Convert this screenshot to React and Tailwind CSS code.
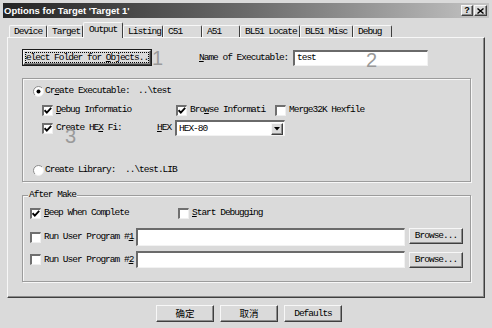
import React from "react";

const mono =
  "font-['Liberation_Mono',monospace] text-[9.5px] tracking-[-1px] leading-[12px] text-black whitespace-nowrap";

function U({ children }) {
  return <span className="underline decoration-1 underline-offset-[1px]">{children}</span>;
}

function Check({ checked }) {
  return (
    <div className="w-[11px] h-[11px] shrink-0 bg-white border-t-2 border-l-2 border-r border-b border-t-[#6f6f6f] border-l-[#6f6f6f] border-r-[#efefef] border-b-[#efefef] flex items-center justify-center">
      {checked && (
        <svg width="8" height="7" viewBox="0 0 8 7">
          <path d="M0.6 3.2 L2.8 5.6 L7.2 0.8" stroke="#000" strokeWidth="1.8" fill="none" />
        </svg>
      )}
    </div>
  );
}

function Radio({ checked }) {
  return (
    <svg width="11" height="11" viewBox="0 0 11 11" className="shrink-0">
      <circle cx="5.5" cy="5.5" r="5" fill="#fff" />
      <path d="M1.96 9.04 A5 5 0 0 1 9.04 1.96" stroke="#8a8a8a" strokeWidth="1" fill="none" />
      <path d="M9.04 1.96 A5 5 0 0 1 1.96 9.04" stroke="#efefef" strokeWidth="1" fill="none" />
      {checked && <circle cx="5.5" cy="5.5" r="2" fill="#000" />}
    </svg>
  );
}

function Btn({ className = "", children }) {
  return (
    <div
      className={`flex items-center justify-center bg-[#dadada] border border-t-[#f7f7f7] border-l-[#f7f7f7] border-r-[#3f3f3f] border-b-[#3f3f3f] shadow-[inset_-1px_-1px_0_#8c8c8c] ${className}`}
    >
      {children}
    </div>
  );
}

function Field({ className = "", children }) {
  return (
    <div
      className={`bg-white border-t-2 border-l-2 border-r border-b border-t-[#6a6a6a] border-l-[#6a6a6a] border-r-[#f2f2f2] border-b-[#f2f2f2] flex items-center pl-[2px] ${className}`}
    >
      {children}
    </div>
  );
}

function Tab({ className = "", children, active }) {
  if (active) {
    return (
      <div
        className={`relative z-10 h-[16px] -mb-px bg-[#dadada] border-t border-l border-t-[#f7f7f7] border-l-[#f7f7f7] border-r border-r-[#3f3f3f] rounded-t-[2px] pl-[5px] pt-[1px] ${mono} ${className}`}
      >
        {children}
      </div>
    );
  }
  return (
    <div
      className={`h-[12px] bg-[#dadada] border-t border-l border-t-[#f7f7f7] border-l-[#f7f7f7] border-r border-r-[#3f3f3f] rounded-t-[2px] pl-[4px] ${mono} ${className}`}
    >
      {children}
    </div>
  );
}

export default function App() {
  return (
    <div className="relative w-[492px] h-[328px] overflow-hidden bg-[#dadada] pt-[3px] px-[3px]">
      {/* title bar */}
      <div className="h-[15px] w-[486px] bg-linear-to-r from-[#252525] via-[#6a6a6a] to-[#c4c4c4] flex items-center pl-[1px]">
        <span className="font-['Liberation_Sans',sans-serif] text-[9.5px] font-bold text-white leading-none whitespace-nowrap">
          Options for Target 'Target 1'
        </span>
        <div className="ml-auto mr-[2px] flex">
          <Btn className="w-[12px] h-[11px]">
            <span className="font-['Liberation_Sans',sans-serif] text-[9px] font-bold leading-none text-black">?</span>
          </Btn>
          <Btn className="w-[13px] h-[11px] ml-px">
            <svg width="7" height="6" viewBox="0 0 7 6">
              <path d="M0.5 0.5 L6.5 5.5 M6.5 0.5 L0.5 5.5" stroke="#000" strokeWidth="1.4" />
            </svg>
          </Btn>
        </div>
      </div>

      {/* tabs */}
      <div className="flex items-end h-[15px] mt-[4px] ml-[6px]">
        <Tab className="w-[38px]">Device</Tab>
        <Tab className="w-[36px]">Target</Tab>
        <Tab className="w-[40px]" active>
          Output
        </Tab>
        <Tab className="w-[40px]">Listing</Tab>
        <Tab className="w-[39px]">C51</Tab>
        <Tab className="w-[38px]">A51</Tab>
        <Tab className="w-[60px]">BL51 Locate</Tab>
        <Tab className="w-[53px]">BL51 Misc</Tab>
        <Tab className="w-[39px]">Debug</Tab>
      </div>

      {/* panel */}
      <div className="relative ml-[4px] w-[478px] h-[261px] bg-[#dadada] border border-t-[#f7f7f7] border-l-[#f7f7f7] border-r-[#3f3f3f] border-b-[#3f3f3f] shadow-[inset_-1px_-1px_0_#8c8c8c]">
        {/* row 1 */}
        <div className="flex items-center mt-[11px] ml-[14px] h-[17px]">
          <div className="w-[130px] h-[17px] border border-[#1a1a1a]">
            <Btn className="w-full h-full p-px">
              <div className={`w-full h-full border border-dotted border-black flex items-center justify-center overflow-x-clip ${mono}`}>
                <span className="shrink-0">
                  Select Folder for <U>O</U>bjects...
                </span>
              </div>
            </Btn>
          </div>
          <div className={`ml-[47px] w-[94px] ${mono}`}>
            <U>N</U>ame of Executable:
          </div>
          <Field className="w-[135px] h-[16px]">
            <span className={mono}>test</span>
          </Field>
        </div>

        {/* group 1 */}
        <div className="mt-[12px] ml-[14px] w-[449px] h-[104px] border border-[#9c9c9c] shadow-[inset_1px_1px_0_#f7f7f7,1px_1px_0_#f7f7f7]">
          <div className="flex items-center mt-[6px] ml-[10px] h-[12px]">
            <Radio checked />
            <div className={`ml-px w-[93px] ${mono}`}>
              Cr<U>e</U>ate Executable:
            </div>
            <div className={mono}>..\test</div>
          </div>

          <div className="flex items-center mt-[7px] ml-[19px] h-[12px]">
            <div className="flex items-center w-[134px]">
              <Check checked />
              <span className={`ml-[3px] ${mono}`}>
                <U>D</U>ebug Informatio
              </span>
            </div>
            <div className="flex items-center w-[99px]">
              <Check checked />
              <span className={`ml-[3px] ${mono}`}>
                Bro<U>w</U>se Informati
              </span>
            </div>
            <div className="flex items-center">
              <Check />
              <span className={`ml-[3px] ${mono}`}>Merge32K Hexfile</span>
            </div>
          </div>

          <div className="flex items-center mt-[4px] ml-[19px] h-[16px]">
            <div className="flex items-center w-[115px]">
              <Check checked />
              <span className={`ml-[3px] ${mono}`}>
                Create HE<U>X</U> Fi:
              </span>
            </div>
            <div className={`w-[18px] ${mono}`}>
              <U>H</U>EX
            </div>
            <Field className="w-[110px] h-[16px] pr-px">
              <span className={`flex-1 ${mono}`}>HEX-80</span>
              <Btn className="w-[12px] h-[12px]">
                <svg width="6" height="4" viewBox="0 0 6 4">
                  <path d="M0 0 H6 L3 3.5 Z" fill="#000" />
                </svg>
              </Btn>
            </Field>
          </div>

          <div className="flex items-center mt-[28px] ml-[10px] h-[12px]">
            <Radio />
            <div className={`ml-px w-[80px] ${mono}`}>Create Library:</div>
            <div className={mono}>..\test.LIB</div>
          </div>
        </div>

        {/* group 2 */}
        <div className="relative mt-[13px] ml-[14px] w-[449px] h-[87px] border border-[#9c9c9c] shadow-[inset_1px_1px_0_#f7f7f7,1px_1px_0_#f7f7f7]">
          <div className={`absolute -top-[7px] left-[5px] px-px bg-[#dadada] ${mono}`}>After Make</div>

          <div className="flex items-center mt-[11px] ml-[7px] h-[12px]">
            <div className="flex items-center w-[148px]">
              <Check checked />
              <span className={`ml-[3px] ${mono}`}>
                <U>B</U>eep When Complete
              </span>
            </div>
            <div className="flex items-center">
              <Check />
              <span className={`ml-[3px] ${mono}`}>
                <U>S</U>tart Debugging
              </span>
            </div>
          </div>

          <div className="flex items-start mt-[9px] ml-[7px]">
            <div className="flex items-center w-[106px] h-[18px]">
              <Check />
              <span className={`ml-[3px] ${mono}`}>
                Run User Program #<U>1</U>
              </span>
            </div>
            <Field className="w-[269px] h-[18px]" />
            <Btn className="ml-[4px] w-[54px] h-[16px]">
              <span className={mono}>Browse...</span>
            </Btn>
          </div>

          <div className="flex items-start mt-[5px] ml-[7px]">
            <div className="flex items-center w-[106px] h-[17px]">
              <Check />
              <span className={`ml-[3px] ${mono}`}>
                Run User Program #<U>2</U>
              </span>
            </div>
            <Field className="w-[269px] h-[17px]" />
            <Btn className="ml-[4px] mt-px w-[54px] h-[16px]">
              <span className={mono}>Browse...</span>
            </Btn>
          </div>
        </div>
      </div>

      {/* bottom buttons */}
      <div className="flex mt-[7px] ml-[153px] gap-[6px]">
        <Btn className="w-[58px] h-[17px]">
          <span className="font-['Noto_Sans_CJK_SC',sans-serif] text-[9.5px] leading-none text-black">确定</span>
        </Btn>
        <Btn className="w-[58px] h-[17px]">
          <span className="font-['Noto_Sans_CJK_SC',sans-serif] text-[9.5px] leading-none text-black">取消</span>
        </Btn>
        <Btn className="w-[58px] h-[17px]">
          <span className={mono}>Defaults</span>
        </Btn>
      </div>

      {/* annotation numbers */}
      <span className="absolute left-[152px] top-[48px] font-['Liberation_Sans',sans-serif] text-[20px] leading-none text-[#9a9a9a]">1</span>
      <span className="absolute left-[366px] top-[50px] font-['Liberation_Sans',sans-serif] text-[20px] leading-none text-[#9a9a9a]">2</span>
      <span className="absolute left-[65px] top-[126px] font-['Liberation_Sans',sans-serif] text-[20px] leading-none text-[#9a9a9a]">3</span>
    </div>
  );
}
